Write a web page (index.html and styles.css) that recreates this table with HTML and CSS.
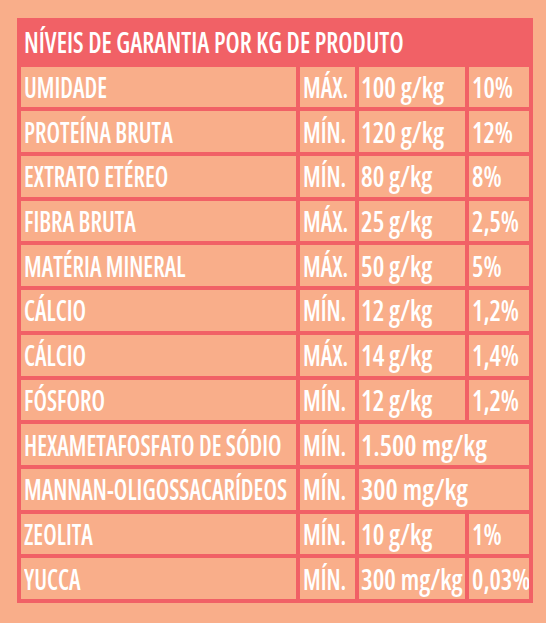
FILE: index.html
```html
<!DOCTYPE html>
<html lang="pt-BR">
<head>
<meta charset="utf-8">
<title>Níveis de garantia</title>
<link rel="stylesheet" href="styles.css">
</head>
<body>
<div class="table">
  <div class="cell head"><span class="txt">NÍVEIS DE GARANTIA POR KG DE PRODUTO</span></div>

  <div class="cell"><span class="txt">UMIDADE</span></div>
  <div class="cell"><span class="txt">MÁX.</span></div>
  <div class="cell val"><span class="txt">100 g/kg</span></div>
  <div class="cell pct"><span class="txt">10%</span></div>

  <div class="cell"><span class="txt">PROTEÍNA BRUTA</span></div>
  <div class="cell"><span class="txt">MÍN.</span></div>
  <div class="cell val"><span class="txt">120 g/kg</span></div>
  <div class="cell pct"><span class="txt">12%</span></div>

  <div class="cell"><span class="txt">EXTRATO ETÉREO</span></div>
  <div class="cell"><span class="txt">MÍN.</span></div>
  <div class="cell val"><span class="txt">80 g/kg</span></div>
  <div class="cell pct"><span class="txt">8%</span></div>

  <div class="cell"><span class="txt">FIBRA BRUTA</span></div>
  <div class="cell"><span class="txt">MÁX.</span></div>
  <div class="cell val"><span class="txt">25 g/kg</span></div>
  <div class="cell pct"><span class="txt">2,5%</span></div>

  <div class="cell"><span class="txt">MATÉRIA MINERAL</span></div>
  <div class="cell"><span class="txt">MÁX.</span></div>
  <div class="cell val"><span class="txt">50 g/kg</span></div>
  <div class="cell pct"><span class="txt">5%</span></div>

  <div class="cell"><span class="txt">CÁLCIO</span></div>
  <div class="cell"><span class="txt">MÍN.</span></div>
  <div class="cell val"><span class="txt">12 g/kg</span></div>
  <div class="cell pct"><span class="txt">1,2%</span></div>

  <div class="cell"><span class="txt">CÁLCIO</span></div>
  <div class="cell"><span class="txt">MÁX.</span></div>
  <div class="cell val"><span class="txt">14 g/kg</span></div>
  <div class="cell pct"><span class="txt">1,4%</span></div>

  <div class="cell"><span class="txt">FÓSFORO</span></div>
  <div class="cell"><span class="txt">MÍN.</span></div>
  <div class="cell val"><span class="txt">12 g/kg</span></div>
  <div class="cell pct"><span class="txt">1,2%</span></div>

  <div class="cell"><span class="txt">HEXAMETAFOSFATO DE SÓDIO</span></div>
  <div class="cell"><span class="txt">MÍN.</span></div>
  <div class="cell val wide span2"><span class="txt">1.500 mg/kg</span></div>

  <div class="cell"><span class="txt">MANNAN-OLIGOSSACARÍDEOS</span></div>
  <div class="cell"><span class="txt">MÍN.</span></div>
  <div class="cell val wide span2"><span class="txt">300 mg/kg</span></div>

  <div class="cell"><span class="txt">ZEOLITA</span></div>
  <div class="cell"><span class="txt">MÍN.</span></div>
  <div class="cell val"><span class="txt">10 g/kg</span></div>
  <div class="cell pct"><span class="txt">1%</span></div>

  <div class="cell"><span class="txt">YUCCA</span></div>
  <div class="cell"><span class="txt">MÍN.</span></div>
  <div class="cell val"><span class="txt">300 mg/kg</span></div>
  <div class="cell pct"><span class="txt">0,03%</span></div>
</div>
</body>
</html>
```
FILE: styles.css
```css
html, body {
  margin: 0;
  padding: 0;
  background: #f9ae8a;
}
body {
  padding: 18px 0 0 17px;
  font-family: "Open Sans", "Noto Sans", sans-serif;
  font-stretch: 75%;
  font-weight: 600;
  font-size: 28px;
  color: #ffffff;
}
.table {
  box-sizing: border-box;
  width: 516px;
  height: 585px;
  padding: 4px;
  background: #f16166;
  display: grid;
  grid-template-columns: 275px 55px 106px 60px;
  grid-template-rows: repeat(13, 1fr);
  gap: 4px;
}
.cell {
  background: #f9ae8a;
  display: flex;
  align-items: center;
  padding-left: 3px;
  white-space: nowrap;
  min-width: 0;
  overflow: hidden;
}
.head {
  grid-column: 1 / -1;
  background: transparent;
}
.span2 {
  grid-column: span 2;
}
.txt {
  display: inline-block;
  line-height: 1;
  transform: scaleX(0.85);
  transform-origin: 0 50%;
}
.head .txt {
  transform: scaleX(0.89);
}
.val {
  padding-left: 2px;
}
.val .txt {
  transform: scaleX(0.93);
}
.val.wide .txt {
  transform: scaleX(0.98);
}
.pct .txt {
  transform: scaleX(0.91);
}
```
